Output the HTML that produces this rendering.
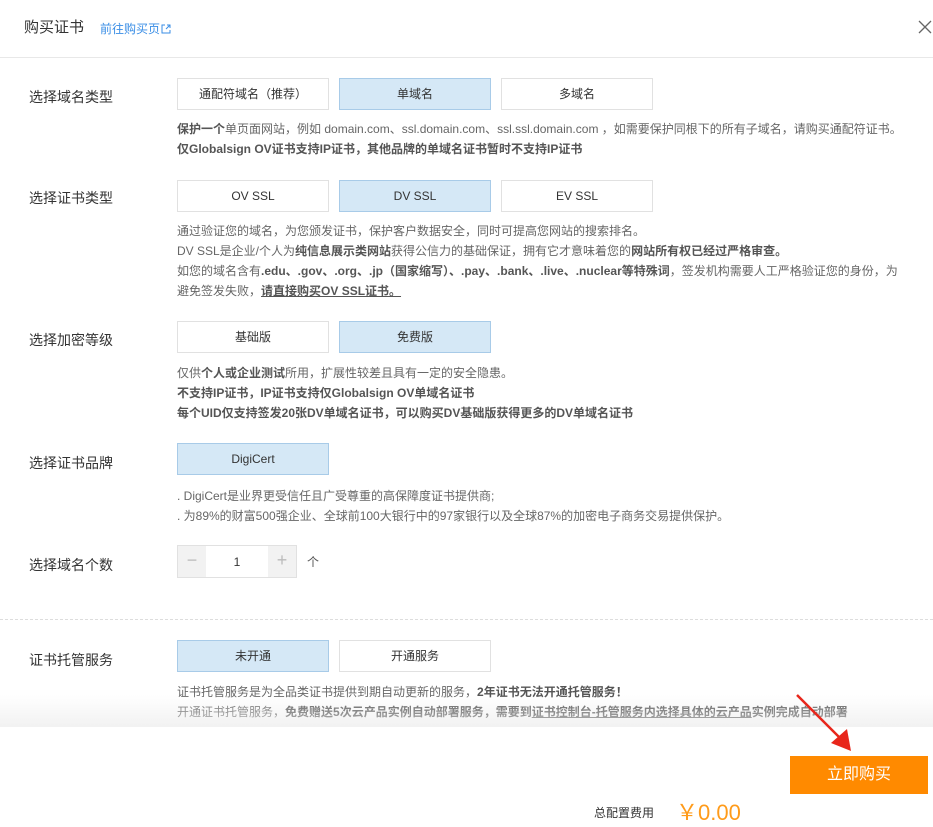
<!DOCTYPE html>
<html><head><meta charset="utf-8">
<style>
*{margin:0;padding:0;box-sizing:border-box}
body{width:933px;height:825px;background:#fff;font-family:"Liberation Sans","Noto Sans CJK SC",sans-serif;color:#333;position:relative;overflow:hidden}
.a{position:absolute;white-space:nowrap}
.lbl{font-size:14px;color:#333;left:29px}
.btn{position:absolute;width:152px;height:32px;border:1px solid #e1e1e1;background:#fff;font-size:12px;color:#333;text-align:center;line-height:30px}
.sel{background:#d5e8f6;border-color:#a8cbe8}
.d{position:absolute;left:177px;font-size:12px;color:#666;line-height:20px;white-space:nowrap}
.d b{color:#555}
</style></head><body>
<div class="a" style="left:24px;top:16px;font-size:15px;color:#333">购买证书</div>
<div class="a" style="left:100px;top:20px;font-size:12px;color:#3a8ee6">前往购买页<svg width="10" height="10" viewBox="0 0 10 10" style="vertical-align:-1px;margin-left:1px"><path d="M4 1H1V9H9V6M6 1H9V4M9 1L5 5" fill="none" stroke="#3a8ee6" stroke-width="1"/></svg></div>
<svg class="a" style="left:918px;top:20px" width="14" height="14" viewBox="0 0 14 14"><path d="M1 1L13 13M13 1L1 13" stroke="#666" stroke-width="1.3"/></svg>
<div class="a" style="left:0;top:57px;width:933px;height:1px;background:#e8e8e8"></div>

<div class="a lbl" style="top:87px">选择域名类型</div>
<div class="btn" style="left:177px;top:78px">通配符域名（推荐）</div>
<div class="btn sel" style="left:339px;top:78px">单域名</div>
<div class="btn" style="left:501px;top:78px">多域名</div>
<div class="d" style="top:119px"><b>保护一个</b>单页面网站，例如 domain.com、ssl.domain.com、ssl.ssl.domain.com ，如需要保护同根下的所有子域名，请购买通配符证书。<br><b>仅Globalsign OV证书支持IP证书，其他品牌的单域名证书暂时不支持IP证书</b></div>

<div class="a lbl" style="top:188px">选择证书类型</div>
<div class="btn" style="left:177px;top:180px">OV SSL</div>
<div class="btn sel" style="left:339px;top:180px">DV SSL</div>
<div class="btn" style="left:501px;top:180px">EV SSL</div>
<div class="d" style="top:221px">通过验证您的域名，为您颁发证书，保护客户数据安全，同时可提高您网站的搜索排名。<br>DV SSL是企业/个人为<b>纯信息展示类网站</b>获得公信力的基础保证，拥有它才意味着您的<b>网站所有权已经过严格审查。</b><br>如您的域名含有<b>.edu、.gov、.org、.jp（国家缩写）、.pay、.bank、.live、.nuclear等特殊词</b>，签发机构需要人工严格验证您的身份，为<br>避免签发失败，<b style="text-decoration:underline">请直接购买OV SSL证书。</b></div>

<div class="a lbl" style="top:330px">选择加密等级</div>
<div class="btn" style="left:177px;top:321px">基础版</div>
<div class="btn sel" style="left:339px;top:321px">免费版</div>
<div class="d" style="top:363px">仅供<b>个人或企业测试</b>所用，扩展性较差且具有一定的安全隐患。<br><b>不支持IP证书，IP证书支持仅Globalsign OV单域名证书</b><br><b>每个UID仅支持签发20张DV单域名证书，可以购买DV基础版获得更多的DV单域名证书</b></div>

<div class="a lbl" style="top:453px">选择证书品牌</div>
<div class="btn sel" style="left:177px;top:443px">DigiCert</div>
<div class="d" style="top:486px">. DigiCert是业界更受信任且广受尊重的高保障度证书提供商;<br>. 为89%的财富500强企业、全球前100大银行中的97家银行以及全球87%的加密电子商务交易提供保护。</div>

<div class="a lbl" style="top:555px">选择域名个数</div>
<div class="a" style="left:177px;top:545px;width:120px;height:33px;border:1px solid #e1e1e1;background:#fff"></div>
<div class="a" style="left:178px;top:546px;width:28px;height:31px;background:#f2f2f2;color:#bbb;font-size:18px;text-align:center;line-height:28px">−</div>
<div class="a" style="left:268px;top:546px;width:28px;height:31px;background:#f2f2f2;color:#bbb;font-size:18px;text-align:center;line-height:28px">+</div>
<div class="a" style="left:206px;top:555px;width:62px;text-align:center;font-size:12px">1</div>
<div class="a" style="left:307px;top:553px;font-size:12px;color:#555">个</div>

<div class="a" style="left:0;top:619px;width:933px;border-top:1px dashed #ddd"></div>

<div class="a lbl" style="top:650px">证书托管服务</div>
<div class="btn sel" style="left:177px;top:640px">未开通</div>
<div class="btn" style="left:339px;top:640px">开通服务</div>
<div class="d" style="top:682px">证书托管服务是为全品类证书提供到期自动更新的服务，<b>2年证书无法开通托管服务！</b><br>开通证书托管服务，<b>免费赠送5次云产品实例自动部署服务，需要到<u>证书控制台-托管服务内选择具体的云产品</u>实例完成自动部署</b></div>
<div class="a" style="left:0;top:695px;width:933px;height:32px;background:linear-gradient(to bottom,rgba(240,240,240,0),rgba(236,236,236,0.7))"></div>

<div class="a" style="left:790px;top:756px;width:138px;height:38px;background:#ff8a00;color:#fff;font-size:16px;text-align:center;line-height:38px">立即购买</div>
<div class="a" style="left:594px;top:804px;font-size:12px;color:#333">总配置费用</div>
<div class="a" style="left:676px;top:795px;font-size:22px;color:#ff9b1a">￥0.00</div>
<svg class="a" style="left:795px;top:693px" width="60" height="60" viewBox="0 0 60 60"><path d="M2 2L50 50" stroke="#e8261b" stroke-width="2.5"/><path d="M56 58L36 50L52 36Z" fill="#e8261b"/></svg>
</body></html>
